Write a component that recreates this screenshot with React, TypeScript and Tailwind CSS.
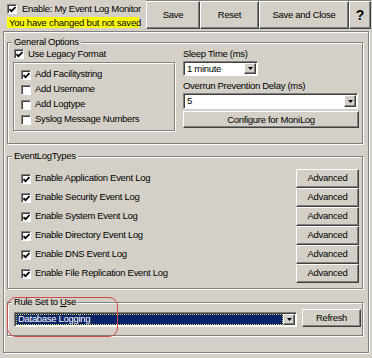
import React from 'react';

const raised =
  'bg-[#d4d0c8] border border-t-white border-l-white border-b-[#404040] border-r-[#404040] shadow-[inset_-1px_-1px_0_#808080]';
const sunken =
  'border border-t-[#808080] border-l-[#808080] border-b-white border-r-white shadow-[inset_1px_1px_0_#404040]';
const etched = 'border border-[#808080] shadow-[inset_1px_1px_0_#fff,1px_1px_0_#fff]';

const Check = ({ checked = false }: { checked?: boolean }) => (
  <span className={`w-[10px] h-[10px] shrink-0 bg-white flex items-center justify-center ${sunken}`}>
    {checked && (
      <svg width="7" height="7" viewBox="0 0 7 7" className="ml-[1px] mt-[1px]">
        <path d="M0.5 3.2 L2.5 5.2 L6.5 1" fill="none" stroke="black" strokeWidth="1.7" />
      </svg>
    )}
  </span>
);

const CheckRow = ({ label, checked, className = '' }: { label: string; checked?: boolean; className?: string }) => (
  <div className={`flex items-center gap-[4px] ${className}`}>
    <Check checked={checked} />
    <span className="whitespace-nowrap">{label}</span>
  </div>
);

const Arrow = () => (
  <span className={`${raised} w-[12px] h-full shrink-0 flex items-center justify-center`}>
    <svg width="5" height="3" viewBox="0 0 5 3">
      <path d="M0 0H5L2.5 3Z" fill="black" />
    </svg>
  </span>
);

const Group = ({ label, className = '', children }: { label: React.ReactNode; className?: string; children: React.ReactNode }) => (
  <fieldset className={`w-[356px] ${etched} ${className}`}>
    <legend className="ml-[4px] px-[2px] leading-[12px] bg-[#d4d0c8]">{label}</legend>
    {children}
  </fieldset>
);

const eventLogs = [
  'Enable Application Event Log',
  'Enable Security Event Log',
  'Enable System Event Log',
  'Enable Directory Event Log',
  'Enable DNS Event Log',
  'Enable File Replication Event Log',
];

export default function App() {
  return (
    <div className="relative w-[372px] h-[358px] overflow-hidden bg-[#d4d0c8] text-black text-[9.5px] tracking-[-0.3px] font-['Liberation_Sans',Arial,sans-serif]">
      {/* top bar */}
      <div className="flex h-[30px]">
        <div className="w-[146px] pl-[7px] pt-[4px]">
          <CheckRow label="Enable: My Event Log Monitor" checked className="h-[10px] gap-[5px]" />
          <div className="mt-[3px] w-[132px] h-[11px] bg-[#ffff00] leading-[11px] pl-[2px] tracking-[-0.2px] whitespace-nowrap">
            You have changed but not saved
          </div>
        </div>
        <div className="flex h-[29px] border-t border-[#808080]">
          <button className={`${raised} w-[54px] h-[28px]`}>Save</button>
          <button className={`${raised} w-[59px] h-[28px]`}>Reset</button>
          <button className={`${raised} w-[90px] h-[28px]`}>Save and Close</button>
          <button className={`${raised} w-[22px] h-[28px] text-[14px] font-bold`}>?</button>
        </div>
      </div>

      {/* main panel */}
      <div className={`ml-[3px] mt-[1px] w-[366px] h-[322px] pl-[3px] pt-[4px] ${etched}`}>
        <Group label="General Options" className="h-[108px]">
          <div className="flex">
            <div className="ml-[5px] w-[162px]">
              <CheckRow label="Use Legacy Format" checked className="h-[12px] pl-[1px]" />
              <div className={`mt-[2px] h-[69px] pl-[7px] pt-[4px] ${etched}`}>
                <CheckRow label="Add Facilitystring" checked className="h-[15px]" />
                <CheckRow label="Add Username" className="h-[15px]" />
                <CheckRow label="Add Logtype" className="h-[15px]" />
                <CheckRow label="Syslog Message Numbers" className="h-[15px]" />
              </div>
            </div>
            <div className="ml-[8px] w-[176px]">
              <div className="h-[12px] leading-[12px]">Sleep Time (ms)</div>
              <div className={`mt-[1px] w-[75px] h-[15px] p-[1px] bg-white flex ${sunken}`}>
                <span className="flex-1 pl-[2px] leading-[11px]">1 minute</span>
                <Arrow />
              </div>
              <div className="mt-[4px] h-[12px] leading-[12px]">Overrun Prevention Delay (ms)</div>
              <div className={`mt-[1px] w-[175px] h-[16px] p-[1px] bg-white flex ${sunken}`}>
                <span className="flex-1 pl-[2px] leading-[12px]">5</span>
                <Arrow />
              </div>
              <button className={`${raised} mt-[2px] w-[176px] h-[17px] leading-[14px]`}>Configure for MoniLog</button>
            </div>
          </div>
        </Group>

        <Group label="EventLogTypes" className="mt-[6px] h-[139px]">
          <div className="pt-[7px]">
            {eventLogs.map((l) => (
              <div key={l} className="flex justify-between h-[19px]">
                <CheckRow label={l} checked className="pl-[13px]" />
                <button className={`${raised} w-[63px] h-[19px] mr-[3px]`}>Advanced</button>
              </div>
            ))}
          </div>
        </Group>

        <Group
          label={
            <>
              Rule Set to <u>U</u>se
            </>
          }
          className="mt-[7px] h-[40px]"
        >
          <div className="flex items-start pl-[6px] pt-[1px]">
            <div className={`mt-[3px] w-[283px] h-[15px] p-[1px] bg-white flex ${sunken}`}>
              <span className="flex-1 bg-[#0a246a] text-white pl-[2px] leading-[10px] outline-1 outline-dotted outline-offset-[-1px] outline-[#d8d860]">
                Database Logging
              </span>
              <Arrow />
            </div>
            <button className={`${raised} ml-[5px] w-[59px] h-[18px]`}>Refresh</button>
          </div>
        </Group>
      </div>

      {/* annotation */}
      <div className="absolute left-[7px] top-[297px] w-[111px] h-[40px] border-[1.5px] border-[#d04a4a] rounded-[9px] pointer-events-none" />
    </div>
  );
}
